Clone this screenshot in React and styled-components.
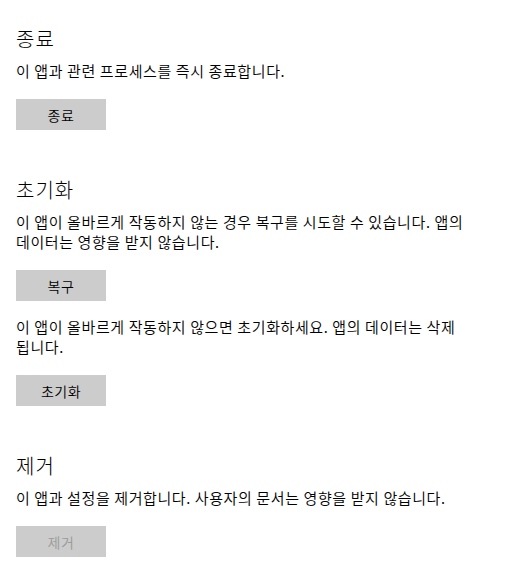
import React from 'react'
import styled, { createGlobalStyle } from 'styled-components'

const GlobalStyle = createGlobalStyle`
  html, body {
    margin: 0;
    padding: 0;
    background: #fff;
  }
  body {
    font-family: 'Noto Sans CJK KR', 'Noto Sans', sans-serif;
    color: #000;
  }
`

const Page = styled.div`
  display: flex;
  flex-direction: column;
  gap: 46px;
  padding: 25px 16px 0 16px;
  width: 460px;
`

const Section = styled.section`
  display: flex;
  flex-direction: column;
  align-items: flex-start;
`

const Title = styled.h2`
  margin: 0 0 8px 0;
  font-size: 20px;
  line-height: 28px;
  font-weight: 300;
  letter-spacing: 1px;
`

const Description = styled.p`
  margin: 0;
  font-size: 15px;
  line-height: 20px;
  font-weight: 350;
  letter-spacing: 0.6px;
  word-break: keep-all;
  & + button {
    margin-top: 18px;
  }
`

const ActionButton = styled.button`
  width: 90px;
  height: 31px;
  padding: 0;
  border: none;
  background: #cccccc;
  color: ${p => (p.disabled ? '#9a9a9a' : '#000')};
  font-family: inherit;
  font-size: 14px;
  font-weight: 350;
  letter-spacing: 0.5px;
  & + p {
    margin-top: 16px;
  }
`

const sections = [
  {
    title: '종료',
    parts: [
      { text: '이 앱과 관련 프로세스를 즉시 종료합니다.', button: '종료' }
    ]
  },
  {
    title: '초기화',
    parts: [
      {
        text: '이 앱이 올바르게 작동하지 않는 경우 복구를 시도할 수 있습니다. 앱의 데이터는 영향을 받지 않습니다.',
        button: '복구'
      },
      {
        // the reference breaks inside this word, so allow a break there
        text: '이 앱이 올바르게 작동하지 않으면 초기화하세요. 앱의 데이터는 삭제\u200B됩니다.',
        button: '초기화'
      }
    ]
  },
  {
    title: '제거',
    parts: [
      {
        text: '이 앱과 설정을 제거합니다. 사용자의 문서는 영향을 받지 않습니다.',
        button: '제거',
        disabled: true
      }
    ]
  }
]

export default function App() {
  return (
    <>
      <GlobalStyle />
      <Page>
        {sections.map(s => (
          <Section key={s.title}>
            <Title>{s.title}</Title>
            {s.parts.map(part => (
              <React.Fragment key={part.button}>
                <Description>{part.text}</Description>
                <ActionButton disabled={part.disabled}>{part.button}</ActionButton>
              </React.Fragment>
            ))}
          </Section>
        ))}
      </Page>
    </>
  )
}
